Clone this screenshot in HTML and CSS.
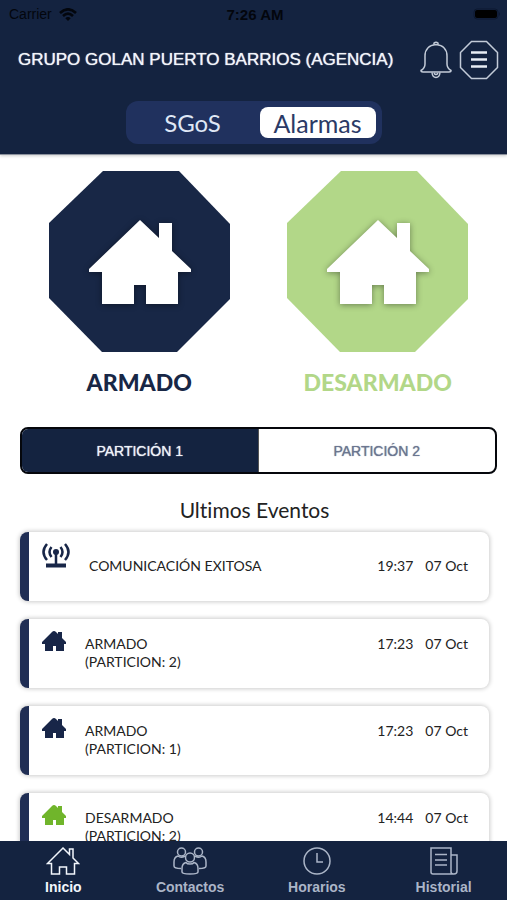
FILE: index.html
```html
<!DOCTYPE html>
<html lang="es">
<head>
<meta charset="utf-8">
<meta name="viewport" content="width=device-width, initial-scale=1">
<title>Alarmas</title>
<link rel="stylesheet" href="styles.css">
</head>
<body>
<svg class="sprite" aria-hidden="true">
  <symbol id="house" viewBox="0 0 102 84"><path d="M51 0 70 18V3h13v28l19 18v3H89v32H57V65H45v19H13V52H0v-3z"/></symbol>
  <symbol id="house-small" viewBox="0 0 24 20"><path d="M12 0q1 0 2 1l2 2V1h4v6l4 4v2h-2v7h-8v-5h-3v5H3v-7H0v-2L10 1q1-1 2-1z"/></symbol>
</svg>
<div class="app">
  <header class="header">
    <div class="status">
      <span class="carrier">Carrier
        <svg width="18" height="13" viewBox="0 0 18 13" fill="none" stroke="currentColor" stroke-width="2.6"><path d="M1 5q8-7.400 16 0M4 8q5-4.600 10 0"/><path d="M9 13 6.300 10.200q2.700-2.200 5.400 0z" fill="currentColor" stroke="none"/></svg>
      </span>
      <span class="clock">7:26 AM</span>
      <svg class="battery" width="28" height="12" viewBox="0 0 28 12"><rect x="1" y="1" width="24" height="10" rx="3" fill="none" stroke="#0c1830"/><rect x="2" y="2" width="22" height="8" rx="2"/><path d="M26 4q2 2 0 4z" fill="#0c1830"/></svg>
    </div>
    <div class="titlebar">
      <h1>GRUPO GOLAN PUERTO BARRIOS (AGENCIA)</h1>
      <button class="icon-button" type="button" aria-label="Notificaciones">
        <svg width="32" height="38" viewBox="0 0 32 38" fill="none" stroke="#c3cbd8" stroke-width="1.500"><path d="M16 3.500C8.500 4 5 9 5 15v8q0 4-4 6.500 0 1.500 2 1.500h26q2 0 2-1.500-4-2.500-4-6.500v-8c0-6-3.500-11-11-11.500z"/><path d="M14 3.500V2q2-1.500 4 0v1.500M12 31.500q.5 5 4 5t4-5M14 32q2 3 4 0"/></svg>
      </button>
      <button class="icon-button" type="button" aria-label="Menú">
        <svg width="40" height="40" viewBox="0 0 40 40" fill="none" stroke="#c3cbd8" stroke-width="1.500"><path d="M12.500 1.500h15l11 11v15l-11 11h-15l-11-11v-15z"/><path d="M12 12.500h16M12 19.500h16M12 26.500h16" stroke="#e8edf4" stroke-width="2.500"/></svg>
      </button>
    </div>
    <div class="switch">
      <button type="button">SGoS</button>
      <button type="button" class="active">Alarmas</button>
    </div>
  </header>
  <main class="content">
    <div class="actions">
      <button type="button" class="arm">
        <svg class="octagon" viewBox="0 0 181 181"><path d="M54 0h76l51 53v75l-53 53H53L0 127V52z" fill="currentColor"/><use class="glyph" href="#house" x="40" y="49" width="102" height="84"/></svg>
        <span>ARMADO</span>
      </button>
      <button type="button" class="disarm">
        <svg class="octagon" viewBox="0 0 181 181"><path d="M54 0h76l51 53v75l-53 53H53L0 127V52z" fill="currentColor"/><use class="glyph" href="#house" x="40" y="49" width="102" height="84"/></svg>
        <span>DESARMADO</span>
      </button>
    </div>
    <div class="segments">
      <button type="button" class="selected">PARTICIÓN 1</button>
      <button type="button">PARTICIÓN 2</button>
    </div>
    <section class="history">
      <h2>Ultimos Eventos</h2>
      <ul class="events">
        <li class="signal">
          <svg width="28" height="25" viewBox="0 0 28 25" fill="none" stroke="#182648" stroke-width="2.500"><path d="M5 1q-7 8 0 16M9.500 4q-4 5 0 10M23 1q7 8 0 16M18.500 4q4 5 0 10M14 9v12"/><circle cx="14" cy="9" r="3" fill="#182648" stroke="none"/><path d="M4 22.500h20" stroke-width="4"/></svg>
          <p>COMUNICACIÓN EXITOSA</p><time>19:37</time><time>07 Oct</time>
        </li>
        <li>
          <svg class="armed" width="24" height="20"><use href="#house-small"/></svg>
          <p>ARMADO<br>(PARTICION: 2)</p><time>17:23</time><time>07 Oct</time>
        </li>
        <li>
          <svg class="armed" width="24" height="20"><use href="#house-small"/></svg>
          <p>ARMADO<br>(PARTICION: 1)</p><time>17:23</time><time>07 Oct</time>
        </li>
        <li>
          <svg class="disarmed" width="24" height="20"><use href="#house-small"/></svg>
          <p>DESARMADO<br>(PARTICION: 2)</p><time>14:44</time><time>07 Oct</time>
        </li>
      </ul>
    </section>
  </main>
  <nav class="tabs">
    <a href="#inicio" class="current">
      <svg width="34" height="28" viewBox="0 0 34 28"><path d="M17 1 1.500 16.500h4V27h8v-7h7v7h8V16.500h4L27 11V2h-3.500v5.500z"/></svg>
      Inicio
    </a>
    <a href="#contactos">
      <svg width="34" height="28" viewBox="0 0 34 28"><circle cx="8.500" cy="5" r="4"/><circle cx="25.500" cy="5" r="4"/><circle cx="17" cy="10.500" r="4.500"/><path d="M13 15.500q-4 1-4 6V25q0 2 8 2t8-2v-3.500q0-5-4-6-1 1.500-4 1.500t-4-1.500zM8 21.500q-7 0-7-2.500v-4q0-5 4-6 3 2.500 7 0M26 21.500q7 0 7-2.500v-4q0-5-4-6-3 2.500-7 0"/></svg>
      Contactos
    </a>
    <a href="#horarios">
      <svg width="28" height="28" viewBox="0 0 28 28"><circle cx="14" cy="14" r="13"/><path d="M14 6v9h6"/></svg>
      Horarios
    </a>
    <a href="#historial">
      <svg width="28" height="28" viewBox="0 0 28 28"><path d="M24 27H3q-2 0-2-2V1h20v24q0 2 3 2t3-3V8h-6M5 7.500h12M5 13h12M5 18h12"/></svg>
      Historial
    </a>
  </nav>
</div>
</body>
</html>
```
FILE: styles.css
```css
* { box-sizing: border-box; }
body {
  margin: 0;
  background: #fff;
  font-family: Lato, sans-serif;
  font-variant-ligatures: none;
  color: #222;
}
button {
  margin: 0;
  padding: 0;
  border: 0;
  background: none;
  font: inherit;
  color: inherit;
}
h1, h2, p, ul { margin: 0; padding: 0; }
.sprite { display: none; }
svg { display: block; flex: none; }

.app {
  display: flex;
  flex-direction: column;
  height: 100vh;
}

.header {
  flex: none;
  background: #142340;
  padding-bottom: 10px;
  border-bottom: 1px solid #8c929e;
  box-shadow: 0 1px 3px #ccc;
}
.status {
  display: grid;
  grid-template-columns: 1fr auto 1fr;
  align-items: center;
  height: 28px;
  padding: 0 6px 0 9px;
  font: 14px "Liberation Sans", sans-serif;
  color: #03060d;
}
.carrier { display: flex; align-items: center; gap: 7px; }
.clock { font-size: 15px; font-weight: bold; }
.battery { justify-self: end; }
.titlebar {
  display: flex;
  align-items: center;
  height: 63px;
  padding: 0 8px 0 18px;
  gap: 7px;
}
.titlebar h1 {
  flex: 1;
  font: 17px "Liberation Sans", sans-serif;
  color: #f2f5fa;
  white-space: nowrap;
  text-shadow: 0 0 1px #f2f5fa;
}
.switch {
  display: grid;
  grid-template-columns: 1fr 1fr;
  width: 256px;
  height: 43px;
  margin: 10px auto 0;
  padding: 6px;
  border-radius: 12px;
  background: #20315e;
  font-size: 24px;
  color: #dfe7f5;
}
.switch .active {
  margin-left: 6px;
  border-radius: 8px;
  background: #fff;
  font-size: 25px;
  color: #2b3a66;
}

.content {
  flex: 1;
  min-height: 0;
  overflow: hidden;
  padding: 16px 10px 0 20px;
}
.actions {
  display: grid;
  grid-template-columns: 1fr 1fr;
}
.actions button {
  display: flex;
  flex-direction: column;
  align-items: center;
  gap: 16px;
  font-size: 23px;
  line-height: 28px;
  font-weight: 900;
}
.octagon { width: 181px; height: 181px; }
.glyph { fill: #fff; filter: drop-shadow(0 1px 3px rgba(0, 0, 0, 0.4)); }
.arm { color: #182746; }
.disarm { color: #b2d788; }

.segments {
  display: grid;
  grid-template-columns: 1fr 1fr;
  height: 47px;
  margin-top: 31px;
  border: 2px solid #05070c;
  border-radius: 8px;
  overflow: hidden;
  font: 14px "Liberation Sans", sans-serif;
  color: #6b7690;
}
.segments button { text-shadow: 0 0 1px #6b7690; }
.segments .selected {
  background: #142340;
  border-right: 1px solid #555;
  color: #eef2f8;
  text-shadow: 0 0 1px #eef2f8;
}

.history { margin: 23px 8px 0 0; }
h2 {
  font-size: 21px;
  line-height: 26px;
  font-weight: 400;
  text-align: center;
}
.events {
  display: grid;
  gap: 18px;
  margin-top: 9px;
  list-style: none;
}
.events li {
  display: flex;
  align-items: flex-start;
  height: 69px;
  padding: 12px 21px 0 13px;
  border-left: 9px solid #202e54;
  border-radius: 8px;
  background: #fff;
  box-shadow: 0 0 4px 1px #ccc;
  font-size: 14px;
  line-height: 18px;
}
.events p { flex: 1; margin-left: 19px; }
.events p, .events time { padding-top: 4px; }
.events time + time { margin-left: 12px; }
.events .signal { padding-top: 11px; }
.events .signal p, .events .signal time { padding-top: 14px; }
.armed { fill: #182648; }
.disarmed { fill: #70b52b; }

.tabs {
  flex: none;
  display: grid;
  grid-template-columns: repeat(4, 1fr);
  height: 59px;
  padding-top: 6px;
  background: #142340;
}
.tabs a {
  display: flex;
  flex-direction: column;
  align-items: center;
  gap: 4px;
  font: bold 14px/16px "Liberation Sans", sans-serif;
  color: #abb5c7;
  text-decoration: none;
}
.tabs svg { fill: none; stroke: currentColor; stroke-width: 1.5; }
.tabs .current { color: #f2f6fc; }
```
